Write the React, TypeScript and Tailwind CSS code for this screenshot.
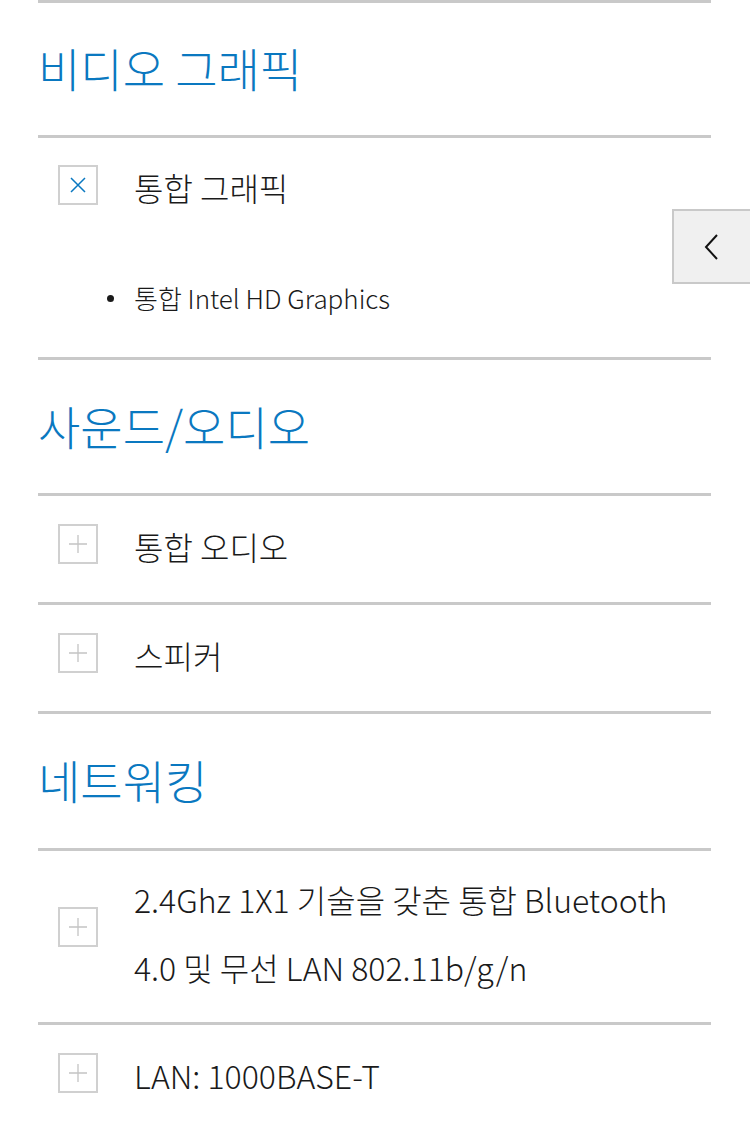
import React from 'react';

const font = { fontFamily: '"Noto Sans CJK KR", "Noto Sans", sans-serif' };

const PlusBox = ({ className = '' }: { className?: string }) => (
  <div className={`w-[40px] h-[40px] shrink-0 border-2 border-[#d0d0d0] flex items-center justify-center ${className}`}>
    <svg width="20" height="20" viewBox="0 0 20 20" fill="none" stroke="#c4c4c4" strokeWidth="1.3">
      <path d="M10 1v18M1 10h18" />
    </svg>
  </div>
);

const CloseBox = () => (
  <div className="w-[40px] h-[40px] shrink-0 border-2 border-[#d0d0d0] flex items-center justify-center">
    <svg width="18" height="18" viewBox="0 0 18 18" fill="none" stroke="#0a78c0" strokeWidth="1.5">
      <path d="M2 2l14 14M16 2L2 16" />
    </svg>
  </div>
);

const Heading = ({ children, className = 'h-[135px]' }: { children: React.ReactNode; className?: string }) => (
  <div className={`border-t-[3px] border-[#c9c9c9] flex items-center ${className}`}>
    <h2 className="text-[46px] font-light text-[#0a78c0] leading-none pb-[4px]">{children}</h2>
  </div>
);

const Item = ({ children }: { children: React.ReactNode }) => (
  <div className="border-t-[3px] border-[#c9c9c9] pt-[26px] pb-[36px] pl-[20px] flex items-center gap-[36px]">
    <PlusBox />
    <span className="text-[32px] font-light text-[#1a1a1a] leading-[40px] pt-[4px]">{children}</span>
  </div>
);

export default function App() {
  return (
    <div className="relative w-[750px] h-[1124px] bg-white overflow-hidden" style={font}>
      <div className="ml-[38px] w-[673px]">
        <Heading>비디오 그래픽</Heading>

        {/* expanded item */}
        <div className="border-t-[3px] border-[#c9c9c9] pt-[25px] pb-[39px] pl-[20px]">
          <div className="flex items-center gap-[36px]">
            <CloseBox />
            <span className="text-[32px] font-light text-[#1a1a1a] leading-[40px] pt-[4px]">통합 그래픽</span>
          </div>
          <ul className="mt-[71px] pl-[76px]">
            <li className="flex items-center text-[26px] font-light text-[#1a1a1a] leading-[40px]">
              <span className="w-[7px] h-[7px] rounded-full bg-[#1a1a1a] mr-[20px] -ml-[27px]" />
              통합 Intel HD Graphics
            </li>
          </ul>
        </div>

        <Heading className="h-[136px]">사운드/오디오</Heading>
        <Item>통합 오디오</Item>
        <Item>스피커</Item>

        <Heading className="h-[137px]">네트워킹</Heading>
        <div className="border-t-[3px] border-[#c9c9c9] pt-[14px] pb-[21px] pl-[20px] flex items-center gap-[36px]">
          <PlusBox className="mb-[12px]" />
          <span className="text-[32px] font-light text-[#1a1a1a] leading-[68px]">
            2.4Ghz 1X1 기술을 갖춘 통합 Bluetooth 4.0 및 무선 LAN 802.11b/g/n
          </span>
        </div>
        <Item>LAN: 1000BASE-T</Item>
      </div>

      {/* side tab */}
      <button className="absolute right-0 top-[209px] w-[78px] h-[75px] bg-[#f0f0f0] border-2 border-r-0 border-[#c9c9c9] flex items-center justify-center">
        <svg width="20" height="28" viewBox="0 0 20 28" fill="none" stroke="#111" strokeWidth="2">
          <path d="M15 2L4 14l11 12" />
        </svg>
      </button>
    </div>
  );
}
